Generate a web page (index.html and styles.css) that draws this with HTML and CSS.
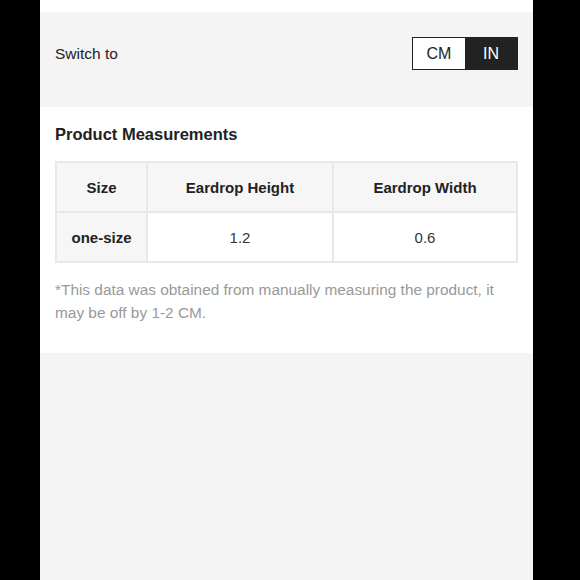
FILE: index.html
```html
<!DOCTYPE html>
<html lang="en">
<head>
    <meta charset="UTF-8">
    <meta name="viewport" content="width=device-width, initial-scale=1.0">
    <title>Size Guide</title>
    <link rel="stylesheet" href="styles.css">
</head>
<body>
    <div class="page">
        <div class="top-strip"></div>

        <div class="switch-bar">
            <span class="switch-label">Switch to</span>
            <div class="unit-toggle">
                <span class="unit">CM</span>
                <span class="unit active">IN</span>
            </div>
        </div>

        <div class="measure">
            <h2>Product Measurements</h2>
            <table class="size-table">
                <colgroup>
                    <col class="col-size">
                    <col class="col-height">
                    <col class="col-width">
                </colgroup>
                <tr>
                    <th>Size</th>
                    <th>Eardrop Height</th>
                    <th>Eardrop Width</th>
                </tr>
                <tr>
                    <th>one-size</th>
                    <td>1.2</td>
                    <td>0.6</td>
                </tr>
            </table>
            <p class="note">*This data was obtained from manually measuring the product, it may be off by 1-2 CM.</p>
        </div>
    </div>
</body>
</html>
```

FILE: styles.css
```css
body {
    margin: 0;
    background: #000;
    font-family: 'Liberation Sans', Arial, sans-serif;
    color: #222;
}

.page {
    width: 493px;
    height: 580px;
    margin-left: 40px;
    background: #f4f4f4;
}

.top-strip {
    height: 12px;
    background: #fff;
}

.switch-bar {
    display: flex;
    justify-content: space-between;
    align-items: center;
    padding: 25px 15px 37px;
    background: #f4f4f4;
}

.switch-label {
    font-size: 15.5px;
}

.unit-toggle {
    display: flex;
    border: 1px solid #222;
}

.unit {
    width: 52px;
    height: 31px;
    line-height: 31px;
    text-align: center;
    font-size: 16px;
    background: #fff;
}

.unit.active {
    background: #222;
    color: #fff;
}

.measure {
    background: #fff;
    padding: 17px 15px 29px;
}

.measure h2 {
    margin: 0 0 17px;
    font-size: 16.5px;
    line-height: 20px;
    font-weight: bold;
}

.size-table {
    width: 463px;
    border-collapse: collapse;
    table-layout: fixed;
    font-size: 15px;
}

.col-size {
    width: 91px;
}

.col-height {
    width: 186px;
}

.size-table th,
.size-table td {
    height: 48px;
    padding: 0;
    border: 2px solid #e8e8e8;
    text-align: center;
}

.size-table th {
    background: #f6f6f6;
    font-weight: bold;
    color: #222;
}

.size-table td {
    color: #333;
}

.note {
    max-width: 445px;
    margin: 15px 0 0;
    font-size: 15.4px;
    line-height: 23px;
    color: #999;
}
```
